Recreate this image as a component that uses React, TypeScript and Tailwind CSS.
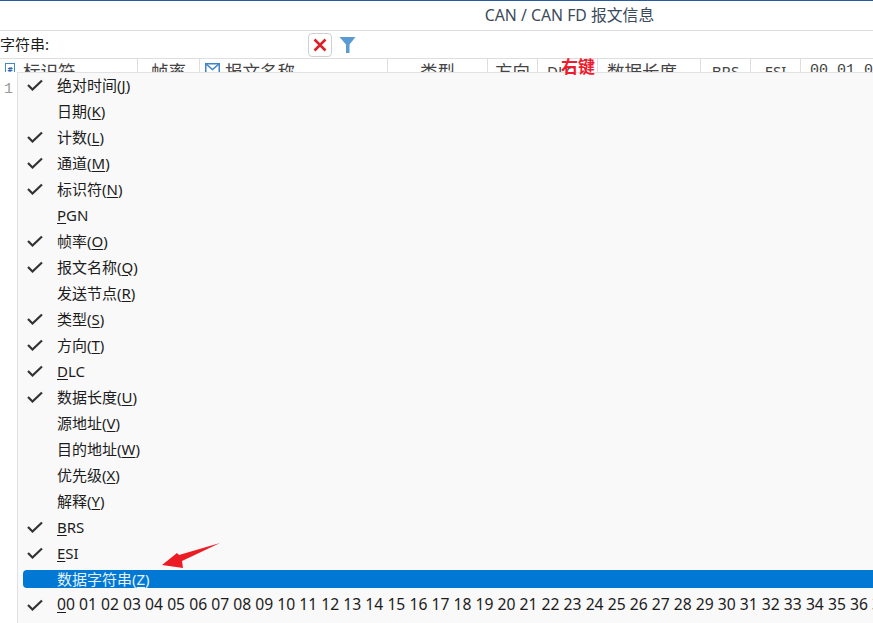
const font = "font-['Noto_Sans','Noto_Sans_CJK_SC',sans-serif]";

const items = [
  { pre: "绝对时间(", key: "J", post: ")", on: true },
  { pre: "日期(", key: "K", post: ")", on: false },
  { pre: "计数(", key: "L", post: ")", on: true },
  { pre: "通道(", key: "M", post: ")", on: true },
  { pre: "标识符(", key: "N", post: ")", on: true },
  { pre: "", key: "P", post: "GN", on: false },
  { pre: "帧率(", key: "O", post: ")", on: true },
  { pre: "报文名称(", key: "Q", post: ")", on: true },
  { pre: "发送节点(", key: "R", post: ")", on: false },
  { pre: "类型(", key: "S", post: ")", on: true },
  { pre: "方向(", key: "T", post: ")", on: true },
  { pre: "", key: "D", post: "LC", on: true },
  { pre: "数据长度(", key: "U", post: ")", on: true },
  { pre: "源地址(", key: "V", post: ")", on: false },
  { pre: "目的地址(", key: "W", post: ")", on: false },
  { pre: "优先级(", key: "X", post: ")", on: false },
  { pre: "解释(", key: "Y", post: ")", on: false },
  { pre: "", key: "B", post: "RS", on: true },
  { pre: "", key: "E", post: "SI", on: true },
];

const columns = [
  { label: "标识符", w: "w-[120px]", cls: "pl-[5px]" },
  { label: "帧率", w: "w-[62px]", cls: "justify-center" },
  { label: "报文名称", w: "w-[188px]", cls: "pl-[25px]" },
  { label: "类型", w: "w-[100px]", cls: "justify-center" },
  { label: "方向", w: "w-[50px]", cls: "justify-center" },
  { label: "DLC", w: "w-[60px]", cls: "pl-[9px] text-[15px]" },
  { label: "数据长度", w: "w-[103px]", cls: "pl-[9px]" },
  { label: "BRS", w: "w-[50px]", cls: "justify-center text-[15px]" },
  { label: "ESI", w: "w-[50px]", cls: "justify-center text-[15px]" },
];

const hexRow = Array.from({ length: 38 }, (_, i) => String(i).padStart(2, "0")).slice(1).join(" ");

const Check = () => (
  <svg width="16" height="12" viewBox="0 0 16 12" fill="none" className="absolute left-[9px] top-[7px]">
    <path d="M1 6 L5.5 10.5 L15 1.5" stroke="#333" strokeWidth="2.2" />
  </svg>
);

const Row = ({ pre, k, post, on }: { pre: string; k: string; post: string; on: boolean }) => (
  <div className="relative flex h-[26px] items-center pl-[39px] text-[15px] text-[#1c1c1c]">
    {on && <Check />}
    <span>
      {pre}
      <span className="underline underline-offset-2">{k}</span>
      {post}
    </span>
  </div>
);

export default function App() {
  return (
    <div className={`relative h-[623px] w-[873px] overflow-hidden bg-white ${font}`}>
      <div className="h-[1px] bg-[#2a5a9e]" />
      <div className="flex h-[30px] items-center justify-center border-b border-[#dedede] pl-[266px] text-[15.8px] text-[#3a4a5a]">
        CAN / CAN FD 报文信息
      </div>
      <div className="flex h-[27px] items-center text-[15px] text-[#1c1c1c]">
        <span className="w-[308px] shrink-0">字符串:</span>
        <div className="flex h-[24px] w-[24px] items-center justify-center rounded-[4px] border border-[#d0d0d0]">
          <svg width="14" height="14" viewBox="0 0 14 14">
            <path d="M1.5 1.5 L12.5 12.5 M12.5 1.5 L1.5 12.5" stroke="#d8232a" strokeWidth="2.6" />
          </svg>
        </div>
        <svg width="17" height="18" viewBox="0 0 17 18" className="ml-[7px]">
          <path d="M0.5 1 H16.5 L10.5 8.5 V17 H7 V8.5 Z" fill="#5b9bd5" />
        </svg>
      </div>
      <div className="flex h-[14px] overflow-hidden border-t border-[#dedede] text-[17.5px] leading-[24px] text-[#444]">
        <div className="w-[18px] shrink-0 pt-[4px] pl-[5px]">
          <div className="flex h-[13px] w-[10px] items-center justify-center border border-[#4a86c5] text-[8px] leading-none font-bold text-[#2a6ab5]">
            #
          </div>
        </div>
        {columns.map((c, i) => (
          <div key={c.label} className={`relative flex h-[24px] shrink-0 border-r border-[#dedede] ${c.w} ${c.cls}`}>
            {i === 2 && (
              <svg width="15" height="11" viewBox="0 0 15 11" fill="none" className="absolute left-[5px] top-[4px]">
                <rect x="0.75" y="0.75" width="13.5" height="9.5" stroke="#3f82c8" strokeWidth="1.5" />
                <path d="M1 1 L7.5 6.5 L14 1" stroke="#3f82c8" strokeWidth="1.5" />
              </svg>
            )}
            {c.label}
          </div>
        ))}
        <div className="pl-[9px] font-['Liberation_Mono',monospace] text-[15px] whitespace-nowrap">00 01 02</div>
      </div>

      <div className="flex">
        <div className="w-[17px] shrink-0 pt-[8px] text-center font-['Liberation_Mono',monospace] text-[15px] leading-[20px] text-[#999]">1</div>
        <div className="h-[551px] min-w-0 flex-1 border-l border-[#e2e2e2] bg-[#f9f9f9] shadow-[inset_0_1px_0_#e2e2e2]">
          {items.map((it) => (
            <Row key={it.pre + it.key} pre={it.pre} k={it.key} post={it.post} on={it.on} />
          ))}
          <div className="flex h-[26px] items-center pl-[5px]">
            <div className="flex h-[18px] flex-1 items-center rounded-l-[4px] bg-[#0078d4] pl-[34px] text-[15px] text-[#e6f1fa]">
              <span>
                数据字符串(<span className="underline underline-offset-2">Z</span>)
              </span>
            </div>
          </div>
          <div className="relative flex h-[26px] items-center pl-[39px] text-[15.7px] whitespace-nowrap text-[#1c1c1c]">
            <Check />
            <span>
              <span className="underline underline-offset-2">0</span>0 {hexRow}
            </span>
          </div>
        </div>
      </div>

      <div className="absolute top-[57px] left-[561px] text-[17px] leading-[20px] font-bold text-[#ee1c2e]">右键</div>
      <svg width="62" height="26" viewBox="0 0 62 26" className="absolute top-[543px] left-[160px]">
        <path d="M2 22 L17 10 L19 12 L60 0 L22 18 L23 25 Z" fill="#ec1c24" />
      </svg>
    </div>
  );
}
